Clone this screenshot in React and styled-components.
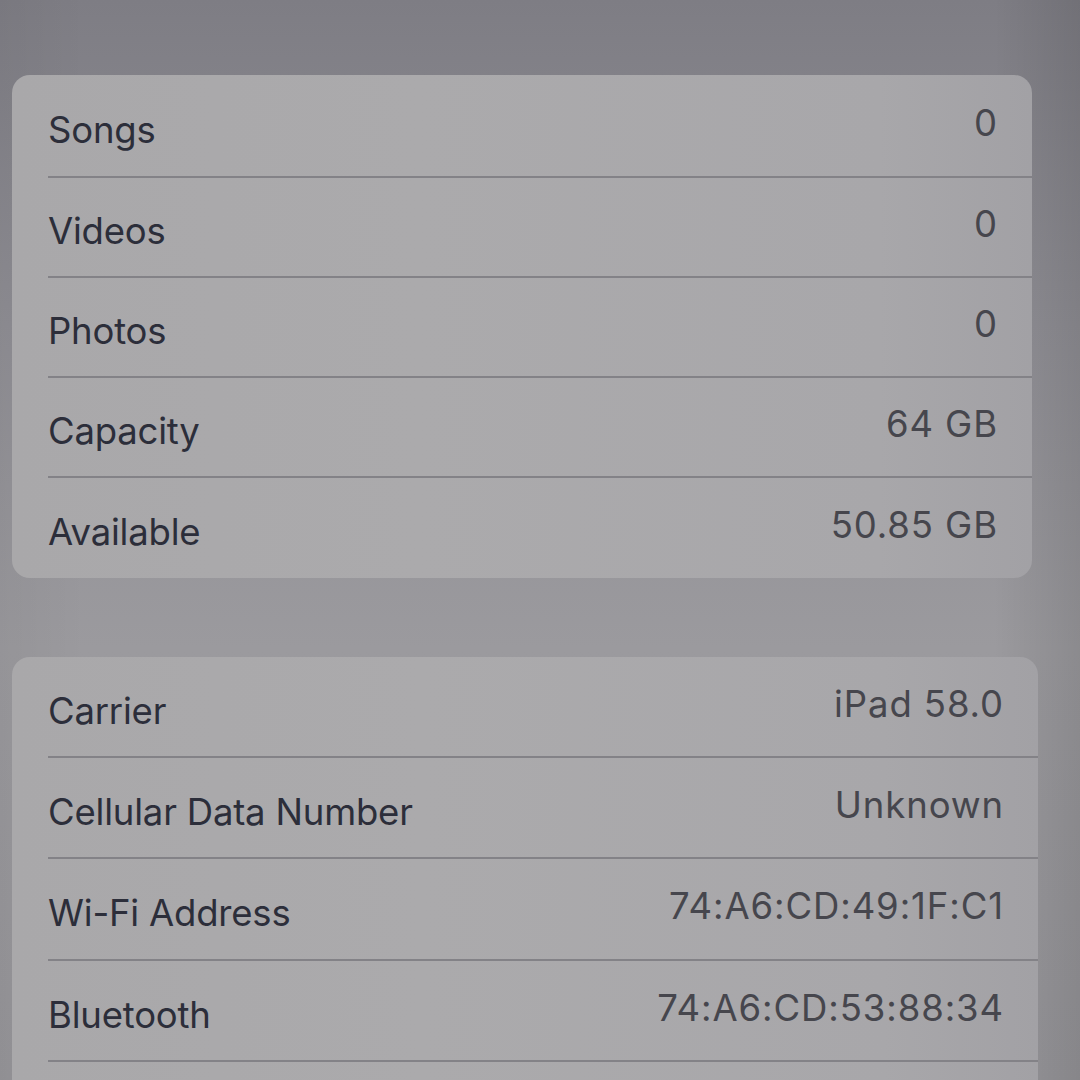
import React from "react";
import styled, { createGlobalStyle } from "styled-components";

const GlobalStyle = createGlobalStyle`
  html, body {
    margin: 0;
    padding: 0;
  }
  body {
    width: 1080px;
    height: 1080px;
    overflow: hidden;
    font-family: Inter, "Noto Sans", "Liberation Sans", sans-serif;
    background: linear-gradient(180deg, #7e7d84 0%, #8f8e94 30%, #9b9a9e 60%, #969599 100%);
  }
`;

const Screen = styled.div`
  width: 1080px;
  height: 1080px;
  overflow: hidden;
  padding-top: 75px;
  box-sizing: border-box;
  display: flex;
  flex-direction: column;
  gap: 79px;
  background: linear-gradient(90deg, rgba(0, 0, 0, 0.04) 0%, rgba(0, 0, 0, 0) 8%, rgba(0, 0, 0, 0) 92%, rgba(0, 0, 0, 0.1) 100%);
`;

const Card = styled.div`
  margin-left: 12px;
  width: ${p => p.width}px;
  border-radius: 18px;
  background: linear-gradient(90deg, #a9a8aa 0%, #abaaac 40%, #a8a7aa 85%, #a2a1a5 100%);
  overflow: hidden;
  flex-shrink: 0;
`;

const Row = styled.div`
  height: ${p => p.height || 100}px;
  margin-left: 36px;
  padding-right: 34px;
  display: flex;
  align-items: center;
  justify-content: space-between;
  border-bottom: ${p => (p.last ? "none" : "2px solid #838287")};
  box-sizing: border-box;
`;

const Label = styled.span`
  font-size: 36.5px;
  color: #2c2e3a;
  letter-spacing: -0.2px;
  padding-top: 8px;
`;

const Value = styled.span`
  font-size: 36.5px;
  color: #46464d;
  letter-spacing: 0.9px;
  padding-bottom: 6px;
`;

const mediaRows = [
  ["Songs", "0"],
  ["Videos", "0"],
  ["Photos", "0"],
  ["Capacity", "64 GB"],
  ["Available", "50.85 GB"],
];

const networkRows = [
  ["Carrier", "iPad 58.0"],
  ["Cellular Data Number", "Unknown"],
  ["Wi-Fi Address", "74:A6:CD:49:1F:C1"],
  ["Bluetooth", "74:A6:CD:53:88:34"],
  ["", ""],
];

export default function App() {
  return (
    <>
      <GlobalStyle />
      <Screen>
        <Card width={1020}>
          {mediaRows.map(([label, value], i) => (
            <Row key={label} height={i === 0 ? 103 : 100} last={i === mediaRows.length - 1}>
              <Label>{label}</Label>
              <Value>{value}</Value>
            </Row>
          ))}
        </Card>
        <Card width={1026}>
          {networkRows.map(([label, value], i) => (
            <Row key={i} height={i === 2 ? 102 : 101}>
              <Label>{label}</Label>
              <Value>{value}</Value>
            </Row>
          ))}
        </Card>
      </Screen>
    </>
  );
}
